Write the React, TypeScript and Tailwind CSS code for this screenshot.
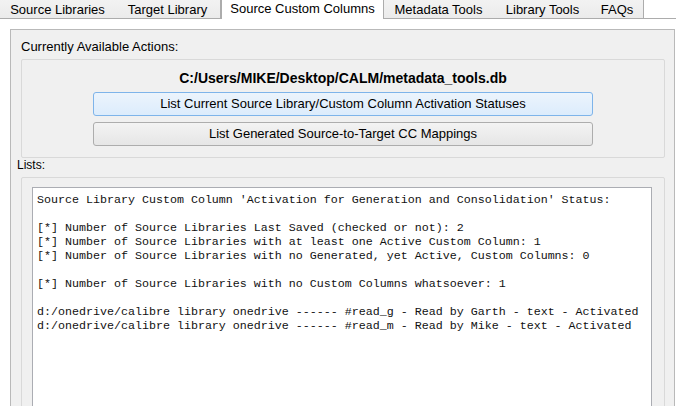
import React from "react";

const tabs = [
  { label: "Source Libraries", w: "w-[116px]" },
  { label: "Target Library", w: "w-[106px]" },
  { label: "Source Custom Columns", w: "w-[163px]", active: true },
  { label: "Metadata Tools", w: "w-[112px]" },
  { label: "Library Tools", w: "w-[98px]" },
  { label: "FAQs", w: "w-[53px]" },
];

const lines = [
  "Source Library Custom Column 'Activation for Generation and Consolidation' Status:",
  "",
  "[*] Number of Source Libraries Last Saved (checked or not): 2",
  "[*] Number of Source Libraries with at least one Active Custom Column: 1",
  "[*] Number of Source Libraries with no Generated, yet Active, Custom Columns: 0",
  "",
  "[*] Number of Source Libraries with no Custom Columns whatsoever: 1",
  "",
  "d:/onedrive/calibre library onedrive ------ #read_g - Read by Garth - text - Activated",
  "d:/onedrive/calibre library onedrive ------ #read_m - Read by Mike - text - Activated",
];

export default function App() {
  return (
    <div className="w-[676px] h-[406px] overflow-hidden bg-white text-black text-[13px] font-['Liberation_Sans',Arial,sans-serif]">
      {/* Tab bar */}
      <div className="flex h-[19px] border-b border-[#acacac]">
        {tabs.map((t) =>
          t.active ? (
            <div
              key={t.label}
              className={`${t.w} h-[19px] bg-white border-x border-[#acacac] flex items-center justify-center leading-[16px] pb-[1px] relative z-10`}
            >
              {t.label}
            </div>
          ) : (
            <div
              key={t.label}
              className={`${t.w} h-[18px] bg-gradient-to-b from-[#f2f2f2] to-[#ebebeb] border-r border-[#acacac] flex items-center justify-center leading-[16px] pt-[2px] -ml-px first:ml-0`}
            >
              {t.label}
            </div>
          )
        )}
      </div>
      {/* Pane */}
      <div className="pt-[10px] pl-[10px]">
        <div className="w-[665px] h-[400px] bg-[#f0f0f0] border-l border-t border-r border-[#b9b9b9]">
          <div className="h-[29px] pt-[9px] pl-[10px] leading-[16px]">Currently Available Actions:</div>
          <div className="ml-[10px] mr-[9px] h-[99px] border border-[#d9d9d9] rounded-[2px] pt-[9px]">
            <div className="h-[18px] leading-[18px] text-center font-bold text-[14px]">
              C:/Users/MIKE/Desktop/CALM/metadata_tools.db
            </div>
            <div className="mt-[5px] flex flex-col items-center gap-[6px]">
              <div className="w-[500px] h-[24px] rounded-[3px] border border-[#7eb4ea] bg-gradient-to-b from-[#ecf4fc] to-[#dcecfc] flex items-center justify-center leading-[16px]">
                List Current Source Library/Custom Column Activation Statuses
              </div>
              <div className="w-[500px] h-[24px] rounded-[3px] border border-[#adadad] bg-gradient-to-b from-[#f3f3f3] to-[#e6e6e6] flex items-center justify-center leading-[16px]">
                List Generated Source-to-Target CC Mappings
              </div>
            </div>
          </div>
          <div className="h-[19px] pl-[6px] leading-[14px] text-[12px]">Lists:</div>
          <div className="ml-[10px] mr-[9px] h-[300px] border border-[#d9d9d9] rounded-[2px] pt-[9px] pl-[10px] pr-[12px]">
            <div className="h-[280px] bg-white border border-[#abadb3] pt-[5px] pl-[4px] font-['Liberation_Mono','Courier_New',monospace] text-[11.67px] leading-[14px] text-[#111]">
              {lines.map((l, i) => (
                <div key={i} className="h-[14px] whitespace-pre">
                  {l}
                </div>
              ))}
            </div>
          </div>
        </div>
      </div>
    </div>
  );
}
